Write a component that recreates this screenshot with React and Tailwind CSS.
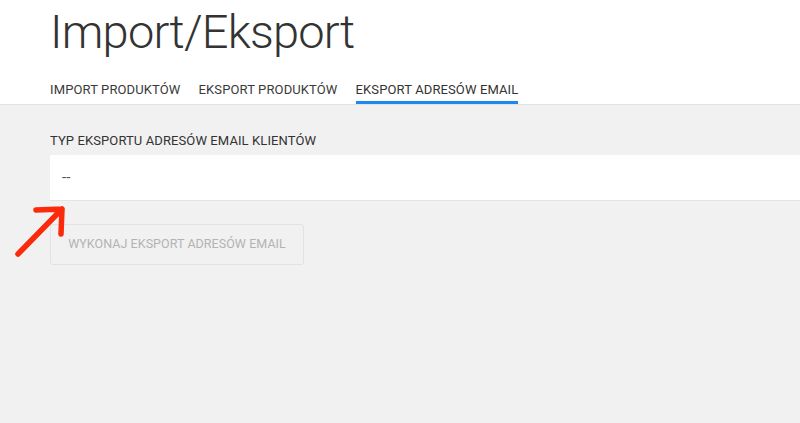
import React from 'react'

const tabs = ['Import produktów', 'Eksport produktów', 'Eksport adresów email']

const App = () => {
	return (
		<div className="relative h-[423px] w-full overflow-hidden bg-[#f1f1f1] font-['Roboto',sans-serif] text-[#333]">
			{/* header */}
			<div className="bg-white border-b border-[#e3e3e3] pl-[50px]">
				<h1 className="pt-[4px] text-[47px] font-light leading-[56px] text-[#333] tracking-[-0.8px]">
					Import/Eksport
				</h1>
				<div className="mt-[20px] flex gap-[18px]">
					{tabs.map((t, i) => (
						<div
							key={t}
							className={
								'pb-[1px] text-[13px] uppercase tracking-[0.12px] leading-[20px] border-b-[3px] ' +
								(i === 2 ? 'border-[#1e88f0] text-[#333]' : 'border-transparent text-[#3a3a3a]')
							}
						>
							{t}
						</div>
					))}
				</div>
			</div>
			{/* form */}
			<div className="pl-[50px] pt-[28px]">
				<label className="block text-[13px] uppercase tracking-[0.1px] leading-[16px] text-[#333]">
					Typ eksportu adresów email klientów
				</label>
				<div className="mt-[6px] h-[46px] w-[800px] bg-white border-b border-[#e4e4e4] flex items-center pl-[12px] text-[15px] text-[#555]">
					--
				</div>
				<button
					type="button"
					disabled
					className="mt-[23px] h-[41px] w-[254px] rounded-[3px] border border-[#e2e2e2] text-[12.5px] uppercase tracking-[0.05px] text-[#b3b3b3]"
				>
					Wykonaj eksport adresów email
				</button>
			</div>
			{/* red annotation arrow */}
			<svg className="absolute left-0 top-0" width="100" height="300" viewBox="0 0 100 300" fill="none">
				<path
					d="M18 254 L62 209 M36 210 L62 209 L61 234"
					stroke="#fb2a0a"
					strokeWidth="5.5"
					strokeLinecap="round"
					strokeLinejoin="round"
				/>
			</svg>
		</div>
	)
}

export default App
